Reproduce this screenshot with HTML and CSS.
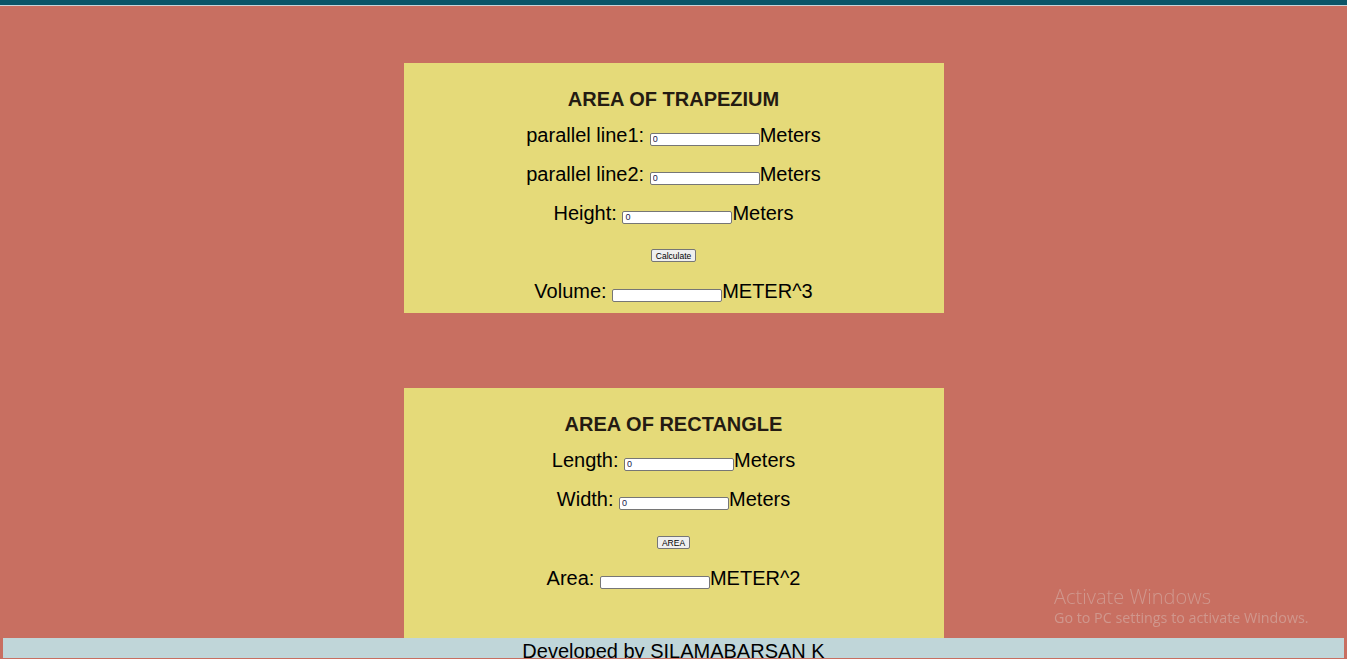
FILE: index.html
```html
<!DOCTYPE html>
<html>
<head>
<meta charset="utf-8">
<title>Area Calculator</title>
<link rel="stylesheet" href="styles.css">
</head>
<body>
<div class="topbar"></div>
<main class="page">
  <section class="card">
    <h2 class="card-title">AREA OF TRAPEZIUM</h2>
    <div class="row row-first">parallel line1: <input class="field" type="text" value="0">Meters</div>
    <div class="row">parallel line2: <input class="field" type="text" value="0">Meters</div>
    <div class="row">Height: <input class="field" type="text" value="0">Meters</div>
    <div class="btn-row"><button class="btn" type="button">Calculate</button></div>
    <div class="row row-result">Volume: <input class="field" type="text" value="">METER^3</div>
  </section>
  <section class="card">
    <h2 class="card-title">AREA OF RECTANGLE</h2>
    <div class="row row-first">Length: <input class="field" type="text" value="0">Meters</div>
    <div class="row">Width: <input class="field" type="text" value="0">Meters</div>
    <div class="btn-row btn-row-2"><button class="btn" type="button">AREA</button></div>
    <div class="row row-result">Area: <input class="field" type="text" value="">METER^2</div>
  </section>
</main>
<footer class="footer">Developed by SILAMABARSAN K</footer>
<div class="watermark">
  <div class="wm-title">Activate Windows</div>
  <div class="wm-sub">Go to PC settings to activate Windows.</div>
</div>
</body>
</html>
```

FILE: styles.css
```css
html, body {
  margin: 0;
  padding: 0;
}
body {
  background: #c86f61;
  font-family: "Liberation Sans", Arial, sans-serif;
  color: #000;
  overflow: hidden;
}
.topbar {
  height: 5px;
  background: #0b5568;
  border-bottom: 1px solid #c9d3d8;
}
.page {
  display: flex;
  flex-direction: column;
  align-items: center;
  gap: 75px;
  padding-top: 57px;
}
.card {
  width: 540px;
  height: 250px;
  box-sizing: border-box;
  background: #e5da79;
  padding-top: 25px;
  text-align: center;
}
.card-title {
  margin: 0;
  font-size: 20px;
  line-height: 23px;
  font-weight: bold;
  color: #241b12;
}
.row {
  font-size: 20px;
  line-height: 23px;
  height: 23px;
  margin-top: 16px;
  white-space: nowrap;
}
.row-first {
  margin-top: 13px;
}
.row-result {
  margin-top: 18px;
}
.field {
  width: 110px;
  height: 13px;
  box-sizing: border-box;
  border: 1px solid #767676;
  border-radius: 2px;
  padding: 0 2px;
  margin: 0;
  font-family: "Liberation Sans", Arial, sans-serif;
  font-size: 9px;
  background: #fff;
  color: #1a1a4a;
  vertical-align: baseline;
}
.btn-row {
  margin-top: 24px;
  height: 13px;
  line-height: 0;
}
.btn-row-2 {
  margin-top: 25px;
}
.btn {
  height: 13px;
  box-sizing: border-box;
  padding: 0 4px;
  margin: 0;
  border: 1px solid #767676;
  border-radius: 2px;
  background: #efefef;
  font-family: "Liberation Sans", Arial, sans-serif;
  font-size: 8.5px;
  line-height: 10px;
  color: #000;
}
.footer {
  position: fixed;
  left: 3px;
  right: 3px;
  bottom: 1px;
  height: 20px;
  box-sizing: border-box;
  padding-top: 2px;
  overflow: hidden;
  background: #c0d6d9;
  text-align: center;
  font-size: 20px;
  line-height: 23px;
}
.watermark {
  position: fixed;
  left: 1054px;
  top: 585px;
  color: #d0978d;
  font-family: "Open Sans", "Noto Sans", sans-serif;
  white-space: nowrap;
}
.wm-title {
  font-size: 20px;
  line-height: 24px;
  font-weight: 300;
}
.wm-sub {
  font-size: 14.3px;
  line-height: 18px;
}
```
